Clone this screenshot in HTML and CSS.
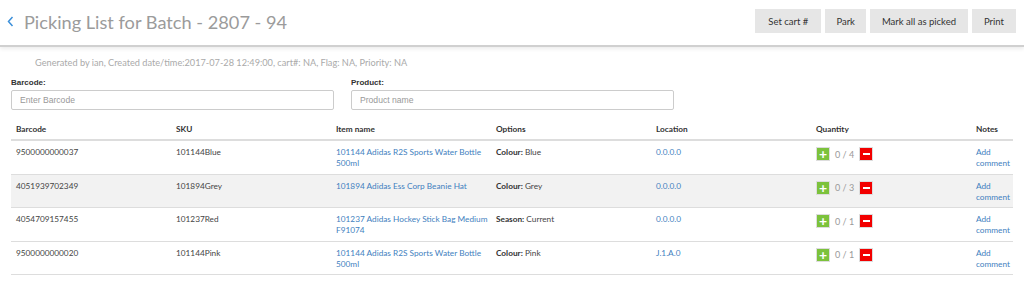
FILE: index.html
```html
<!DOCTYPE html>
<html lang="en">
<head>
  <meta charset="UTF-8">
  <title>Picking List</title>
  <link rel="stylesheet" href="styles.css">
</head>
<body>
  <header class="page-header">
    <h1 class="title"><a class="back" href="#"><svg width="7" height="11" viewBox="0 0 7 11"><path d="M5.5 1 L1.5 5.5 L5.5 10" fill="none" stroke="#3b8fd9" stroke-width="1.5"/></svg></a>Picking List for Batch - 2807 - 94</h1>
    <div class="actions">
      <button class="btn">Set cart #</button>
      <button class="btn">Park</button>
      <button class="btn">Mark all as picked</button>
      <button class="btn">Print</button>
    </div>
  </header>

  <div class="content">
    <p class="meta">Generated by ian, Created date/time:2017-07-28 12:49:00, cart#: NA, Flag: NA, Priority: NA</p>

    <div class="filters">
      <div class="field">
        <label>Barcode:</label>
        <input type="text" placeholder="Enter Barcode">
      </div>
      <div class="field">
        <label>Product:</label>
        <input type="text" placeholder="Product name">
      </div>
    </div>

    <table class="pick-table">
      <thead>
        <tr>
          <th>Barcode</th><th>SKU</th><th>Item name</th><th>Options</th><th>Location</th><th>Quantity</th><th class="notes">Notes</th>
        </tr>
      </thead>
      <tbody>
        <tr>
          <td>9500000000037</td>
          <td>101144Blue</td>
          <td><a href="#">101144 Adidas R2S Sports Water Bottle 500ml</a></td>
          <td><b>Colour:</b> Blue</td>
          <td><a href="#">0.0.0.0</a></td>
          <td><span class="qty"><span class="plus">+</span> 0 / 4 <span class="minus"></span></span></td>
          <td class="notes"><a href="#">Add comment</a></td>
        </tr>
        <tr class="alt">
          <td>4051939702349</td>
          <td>101894Grey</td>
          <td><a href="#">101894 Adidas Ess Corp Beanie Hat</a></td>
          <td><b>Colour:</b> Grey</td>
          <td><a href="#">0.0.0.0</a></td>
          <td><span class="qty"><span class="plus">+</span> 0 / 3 <span class="minus"></span></span></td>
          <td class="notes"><a href="#">Add comment</a></td>
        </tr>
        <tr>
          <td>4054709157455</td>
          <td>101237Red</td>
          <td><a href="#">101237 Adidas Hockey Stick Bag Medium F91074</a></td>
          <td><b>Season:</b> Current</td>
          <td><a href="#">0.0.0.0</a></td>
          <td><span class="qty"><span class="plus">+</span> 0 / 1 <span class="minus"></span></span></td>
          <td class="notes"><a href="#">Add comment</a></td>
        </tr>
        <tr>
          <td>9500000000020</td>
          <td>101144Pink</td>
          <td><a href="#">101144 Adidas R2S Sports Water Bottle 500ml</a></td>
          <td><b>Colour:</b> Pink</td>
          <td><a href="#">J.1.A.0</a></td>
          <td><span class="qty"><span class="plus">+</span> 0 / 1 <span class="minus"></span></span></td>
          <td class="notes"><a href="#">Add comment</a></td>
        </tr>
      </tbody>
    </table>
  </div>
</body>
</html>
```

FILE: styles.css
```css
body {
  margin: 0;
  font-family: Lato, "Open Sans", sans-serif;
  font-size: 8.25px;
  color: #444;
  background: #fff;
}

a {
  color: #3f7fc0;
  text-decoration: none;
}

.page-header {
  display: flex;
  align-items: center;
  justify-content: space-between;
  height: 45px;
  padding: 0 8px 0 7px;
  border-bottom: 2px solid #d0d0d0;
  box-shadow: 0 2px 4px rgba(0, 0, 0, 0.08);
}

.title {
  display: flex;
  align-items: center;
  margin: -2px 0 0 0;
  font-size: 18.2px;
  font-weight: normal;
  color: #9b9b9b;
}

.back {
  display: flex;
  margin-right: 10px;
}

.actions {
  display: flex;
  gap: 4px;
  margin-top: -3px;
}

.btn {
  height: 24px;
  padding: 0 12px;
  border: none;
  background: #e6e6e6;
  font-family: Lato, sans-serif;
  font-size: 9.5px;
  color: #333;
}

.btn:first-child {
  padding: 0 13px;
}

.btn:nth-child(2) {
  padding: 0 11px;
}

.content {
  padding: 0 11px;
}

.meta {
  margin: 10px 0 10px 24px;
  color: #aaa;
  font-size: 9.2px;
}

.filters {
  display: flex;
  gap: 17px;
}

.field label {
  display: block;
  font-family: "Liberation Sans", Arial, sans-serif;
  font-size: 8px;
  font-weight: bold;
  color: #333;
  margin-bottom: 3px;
}

.field input {
  width: 323px;
  height: 20px;
  box-sizing: border-box;
  padding: 0 8px;
  border: 1px solid #ccc;
  border-radius: 2px;
  font-family: "Liberation Sans", Arial, sans-serif;
  font-size: 8.6px;
}

.field input::placeholder {
  color: #999;
}

.pick-table {
  width: 1002px;
  margin-top: 9px;
  border-collapse: collapse;
  table-layout: fixed;
}

.pick-table th,
.pick-table td {
  width: 152px;
  text-align: left;
  vertical-align: top;
  padding: 6px 3px 4.5px 5px;
  line-height: 11px;
}

.pick-table th {
  padding: 5px 3px 4px 5px;
  font-weight: bold;
  color: #333;
  border-bottom: 2px solid #ddd;
}

.pick-table .notes {
  width: 34px;
}

.pick-table td {
  border-bottom: 1px solid #ddd;
}

.pick-table tr.alt td {
  background: #f2f2f2;
}

.pick-table b {
  color: #333;
}

.qty {
  display: inline-flex;
  align-items: center;
  gap: 5px;
  color: #999;
  font-size: 9px;
}

.plus,
.minus {
  display: inline-flex;
  align-items: center;
  justify-content: center;
  width: 12px;
  height: 12px;
  border: 1px solid #ddd;
  color: #fff;
  font-weight: bold;
  font-size: 14px;
  line-height: 12px;
}

.plus {
  background: #7cc23c;
}

.minus {
  background: #f20000;
}

.minus::before {
  content: "";
  width: 7px;
  height: 2px;
  background: #fff;
}
```
